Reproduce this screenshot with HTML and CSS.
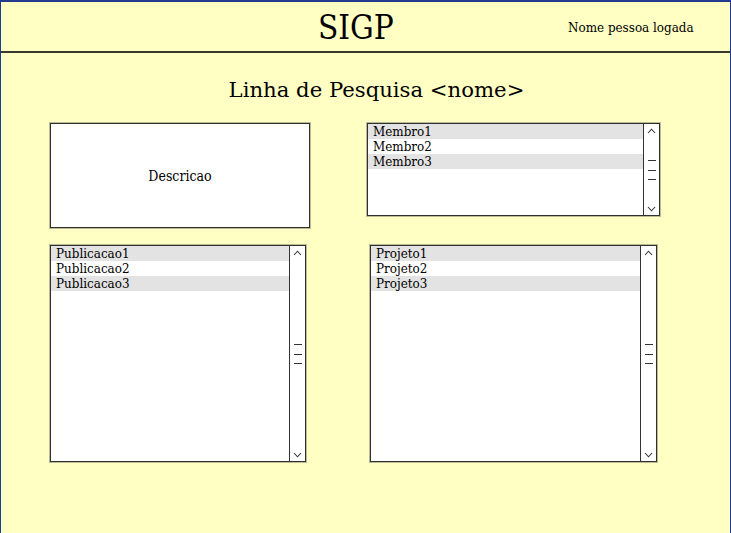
FILE: index.html
```html
<!DOCTYPE html>
<html>
<head>
<meta charset="utf-8">
<link rel="stylesheet" href="styles.css">
</head>
<body>
<div class="page">
  <header class="header">
    <h1 class="brand">SIGP</h1>
    <span class="user">Nome pessoa logada</span>
  </header>
  <main class="content">
    <h2 class="title">Linha de Pesquisa &lt;nome&gt;</h2>
    <div class="row row-top">
      <div class="box desc">Descricao</div>
      <div class="box list members">
        <ul class="items">
          <li class="alt">Membro1</li>
          <li>Membro2</li>
          <li class="alt">Membro3</li>
        </ul>
        <div class="scroll">
          <svg class="caret" width="9" height="6" viewBox="0 0 9 6"><path d="M1 5 L4.5 1.2 L8 5" fill="none" stroke="#333" stroke-width="1.1"/></svg>
          <div class="grip"><i></i><i></i><i></i></div>
          <svg class="caret" width="9" height="6" viewBox="0 0 9 6"><path d="M1 1 L4.5 4.8 L8 1" fill="none" stroke="#333" stroke-width="1.1"/></svg>
        </div>
      </div>
    </div>
    <div class="row row-bottom">
      <div class="box list pubs">
        <ul class="items">
          <li class="alt">Publicacao1</li>
          <li>Publicacao2</li>
          <li class="alt">Publicacao3</li>
        </ul>
        <div class="scroll">
          <svg class="caret" width="9" height="6" viewBox="0 0 9 6"><path d="M1 5 L4.5 1.2 L8 5" fill="none" stroke="#333" stroke-width="1.1"/></svg>
          <div class="grip"><i></i><i></i><i></i></div>
          <svg class="caret" width="9" height="6" viewBox="0 0 9 6"><path d="M1 1 L4.5 4.8 L8 1" fill="none" stroke="#333" stroke-width="1.1"/></svg>
        </div>
      </div>
      <div class="box list projs">
        <ul class="items">
          <li class="alt">Projeto1</li>
          <li>Projeto2</li>
          <li class="alt">Projeto3</li>
        </ul>
        <div class="scroll">
          <svg class="caret" width="9" height="6" viewBox="0 0 9 6"><path d="M1 5 L4.5 1.2 L8 5" fill="none" stroke="#333" stroke-width="1.1"/></svg>
          <div class="grip"><i></i><i></i><i></i></div>
          <svg class="caret" width="9" height="6" viewBox="0 0 9 6"><path d="M1 1 L4.5 4.8 L8 1" fill="none" stroke="#333" stroke-width="1.1"/></svg>
        </div>
      </div>
    </div>
  </main>
</div>
</body>
</html>
```

FILE: styles.css
```css
* { box-sizing: border-box; }
html, body { margin: 0; padding: 0; }
body {
  font-family: "DejaVu Serif", serif;
  color: #000;
  background: #ffffc4;
}
.page {
  width: 731px;
  height: 533px;
  border: 1px solid #1f3a8f;
  border-top-width: 2px;
  border-bottom: none;
  background: #ffffc4;
  overflow: hidden;
}
.header {
  height: 51px;
  border-bottom: 2px solid #3a3a30;
  display: flex;
  align-items: center;
  padding-left: 317px;
}
.brand {
  margin: 0;
  font-weight: normal;
  font-size: 33px;
  font-stretch: condensed;
  line-height: 1;
  width: 250px;
  padding-top: 2px;
}
.user {
  font-size: 13.3px;
  font-stretch: condensed;
  padding-top: 1px;
}
.content {
  padding-top: 25px;
}
.title {
  margin: 0 0 21px 0;
  font-weight: normal;
  font-size: 21.2px;
  text-align: center;
  padding-left: 22px;
  line-height: 24px;
}
.row {
  display: flex;
  align-items: flex-start;
  padding-left: 49px;
}
.row-top { gap: 57px; }
.row-bottom { gap: 64px; margin-top: 17px; }
.box {
  background: #fff;
  border: 1px solid #2f2f2f;
  box-shadow: 0 0 0 1px rgba(60,60,60,0.35);
}
.desc {
  width: 260px;
  height: 105px;
  display: flex;
  align-items: center;
  justify-content: center;
  font-size: 14px;
  font-stretch: condensed;
  padding-left: 0;
}
.list {
  display: flex;
}
.members { width: 293px; height: 93px; }
.pubs { width: 256px; height: 217px; }
.projs { width: 287px; height: 217px; }
.items {
  list-style: none;
  margin: 0;
  padding: 0;
  flex: 1;
  font-size: 13.3px;
  font-stretch: condensed;
}
.items li {
  height: 15px;
  line-height: 15px;
  padding-left: 5px;
}
.items li.alt { background: #e3e3e3; }
.scroll {
  width: 16px;
  border-left: 1px solid #333;
  display: flex;
  flex-direction: column;
  align-items: center;
  justify-content: space-between;
  padding: 4px 0 3px;
}
.caret { display: block; }
.grip {
  display: flex;
  flex-direction: column;
  gap: 8.5px;
}
.grip i {
  display: block;
  width: 8px;
  height: 1px;
  background: #333;
}
```
